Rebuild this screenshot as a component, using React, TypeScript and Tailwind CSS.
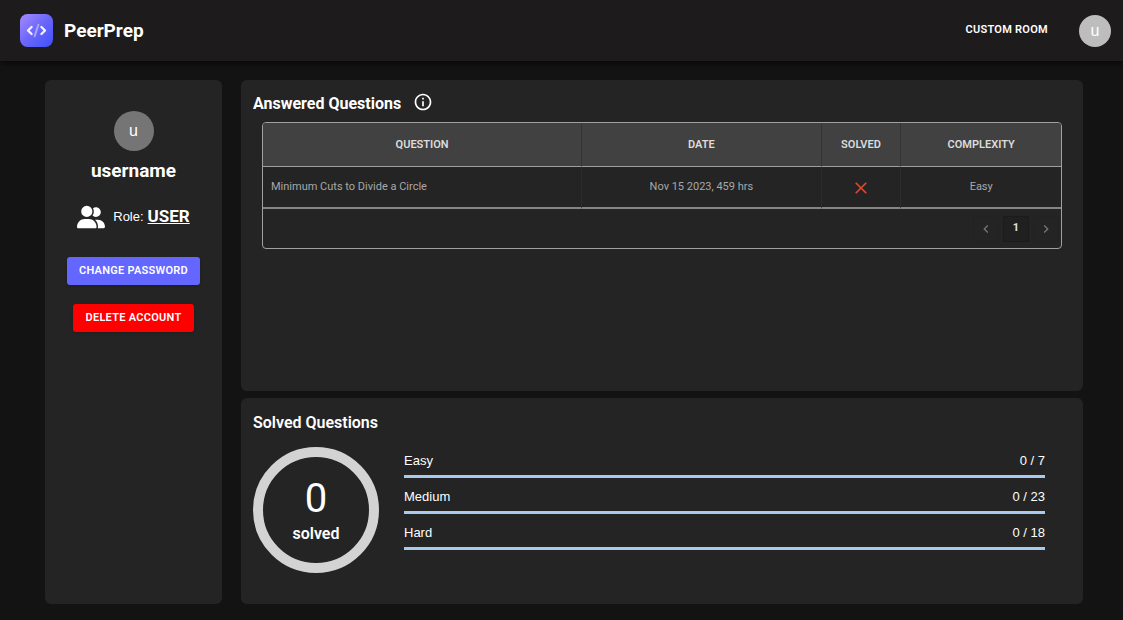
import React from "react";
import { FaUserGroup } from "react-icons/fa6";
import { MdInfoOutline, MdChevronLeft, MdChevronRight } from "react-icons/md";

const columns = [
  { label: "Question", width: "w-2/5" },
  { label: "Date", width: "w-[30%]" },
  { label: "Solved", width: "w-[10%]" },
  { label: "Complexity", width: "w-1/5" },
];

const progress = [
  { level: "Easy", solved: 0, total: 7 },
  { level: "Medium", solved: 0, total: 23 },
  { level: "Hard", solved: 0, total: 18 },
];

const cell = "border-b-2 border-b-[#858585] border-r border-r-[#2c2c2c] pt-px last:border-r-0";

function Logo() {
  return (
    <svg viewBox="0 0 33 33" className="size-[33px]" aria-hidden="true">
      <defs>
        <linearGradient id="logo-fill" x1="0" y1="0" x2="1" y2="1">
          <stop offset="0" stopColor="#a48cfc" />
          <stop offset="0.5" stopColor="#6a66fb" />
          <stop offset="1" stopColor="#3f51fb" />
        </linearGradient>
      </defs>
      <rect width="33" height="33" rx="7.5" fill="url(#logo-fill)" />
      <g fill="none" strokeLinecap="round" strokeLinejoin="round" strokeWidth="2.3">
        <path d="M11.6 13 8 16.5l3.6 3.5M21.4 13l3.6 3.5-3.6 3.5" stroke="#f4f3ff" />
        <path d="M18.4 10.8 14.6 22.2" stroke="#a9a8ff" strokeWidth="2" />
      </g>
    </svg>
  );
}

function Header() {
  return (
    <header className="flex h-[61px] items-center justify-between bg-[#1e1b1c] pr-3 pl-5 shadow-md shadow-black/40">
      <a href="#" className="flex items-center gap-[11px]">
        <Logo />
        <span className="text-[19px] leading-6 font-bold">PeerPrep</span>
      </a>
      <nav className="flex items-center gap-[31px]">
        <a href="#" className="text-[11px] font-semibold tracking-wide uppercase">Custom Room</a>
        <button
          type="button"
          aria-label="Account"
          className="size-8 rounded-full bg-[#bdbdbd] font-['Liberation_Sans',sans-serif] text-base text-white"
        >
          u
        </button>
      </nav>
    </header>
  );
}

function Profile() {
  return (
    <aside className="flex w-[177px] shrink-0 flex-col items-center rounded-md bg-[#242424] pt-[31px]">
      <div className="flex size-10 items-center justify-center rounded-full bg-[#757575] font-['Liberation_Sans',sans-serif] text-base">
        u
      </div>
      <h1 className="mt-2 text-[19px] leading-6 font-bold">username</h1>
      <div className="mt-5 flex h-7 items-center">
        <FaUserGroup className="size-7" />
        <span className="ml-2 font-['Liberation_Sans',sans-serif] text-[13px]">Role:</span>
        <span className="ml-1 text-[17px] font-bold underline">USER</span>
      </div>
      <button type="button" className="mt-[26px] h-7 rounded-[3px] bg-[#6366ff] px-3 text-[11px] font-semibold tracking-wide uppercase shadow">
        Change Password
      </button>
      <button type="button" className="mt-[19px] h-7 rounded-[3px] bg-[#ff0000] px-3 text-[11px] font-semibold tracking-wide uppercase shadow">
        Delete Account
      </button>
    </aside>
  );
}

function Answered() {
  return (
    <section className="flex-1 rounded-md bg-[#242424] px-3 pt-3">
      <div className="flex h-[30px] items-start gap-3">
        <h2 className="text-base leading-6 font-bold">Answered Questions</h2>
        <MdInfoOutline className="size-5" />
      </div>
      <div className="mx-[9px] overflow-hidden rounded-sm border border-[#a0a0a0]">
        <table className="w-full table-fixed border-separate border-spacing-0 text-[11px]">
          <thead>
            <tr className="h-11 bg-[#414141] text-[#dcdcdc]">
              {columns.map((c) => (
                <th
                  key={c.label}
                  className={`${c.width} border-r border-b border-r-[#343434] border-b-[#a0a0a0] p-0 pt-px font-semibold uppercase last:border-r-0`}
                >
                  {c.label}
                </th>
              ))}
            </tr>
          </thead>
          <tbody>
            <tr className="h-[42px] text-center text-[#a8a8a8]">
              <td className={`${cell} px-2 text-left`}>Minimum Cuts to Divide a Circle</td>
              <td className={cell}>Nov 15 2023, 459 hrs</td>
              <td className={cell}>
                <svg viewBox="0 0 12 12" className="mx-auto size-3" role="img" aria-label="Not solved">
                  <path d="m.7.7 10.6 10.6M11.3.7.7 11.3" stroke="#e5482d" strokeWidth="1.6" />
                </svg>
              </td>
              <td className={cell}>Easy</td>
            </tr>
          </tbody>
        </table>
        <div className="flex h-[39px] items-center justify-end gap-1 pr-[2px]">
          <button type="button" aria-label="Previous page" className="flex size-[26px] items-center justify-center rounded-xs border border-[#222222] text-[#777777]">
            <MdChevronLeft className="size-4" />
          </button>
          <button type="button" className="size-[26px] rounded-xs border border-[#1b1b1b] bg-[#202020] text-[11px] font-bold text-[#e0e0e0]">
            1
          </button>
          <button type="button" aria-label="Next page" className="flex size-[26px] items-center justify-center rounded-xs border border-[#222222] text-[#777777]">
            <MdChevronRight className="size-4" />
          </button>
        </div>
      </div>
    </section>
  );
}

function Solved() {
  return (
    <section className="h-[206px] rounded-md bg-[#242424] pt-[13px] pr-[38px] pl-3">
      <h2 className="text-base leading-6 font-semibold">Solved Questions</h2>
      <div className="mt-3 flex gap-[25px]">
        <div className="flex size-[126px] shrink-0 flex-col items-center justify-center rounded-full border-[10px] border-[#d3d3d3] pt-1">
          <span className="text-[40px] leading-10">0</span>
          <span className="mt-[3px] text-base leading-6 font-semibold">solved</span>
        </div>
        <ul className="flex-1 pt-1 font-['Liberation_Sans',sans-serif] text-[13px] leading-5">
          {progress.map((p) => (
            <li key={p.level} className="h-9">
              <div className="flex justify-between">
                <span>{p.level}</span>
                <span>{p.solved} / {p.total}</span>
              </div>
              <div className="mt-1 h-[3px] bg-[#a7caed]" />
            </li>
          ))}
        </ul>
      </div>
    </section>
  );
}

export default function App() {
  return (
    <div className="flex min-h-screen flex-col bg-[#131313] font-[Roboto,sans-serif] text-white">
      <Header />
      <main className="flex flex-1 gap-[19px] pt-[19px] pr-10 pb-4 pl-[45px]">
        <Profile />
        <div className="flex min-w-0 flex-1 flex-col gap-[7px]">
          <Answered />
          <Solved />
        </div>
      </main>
    </div>
  );
}
